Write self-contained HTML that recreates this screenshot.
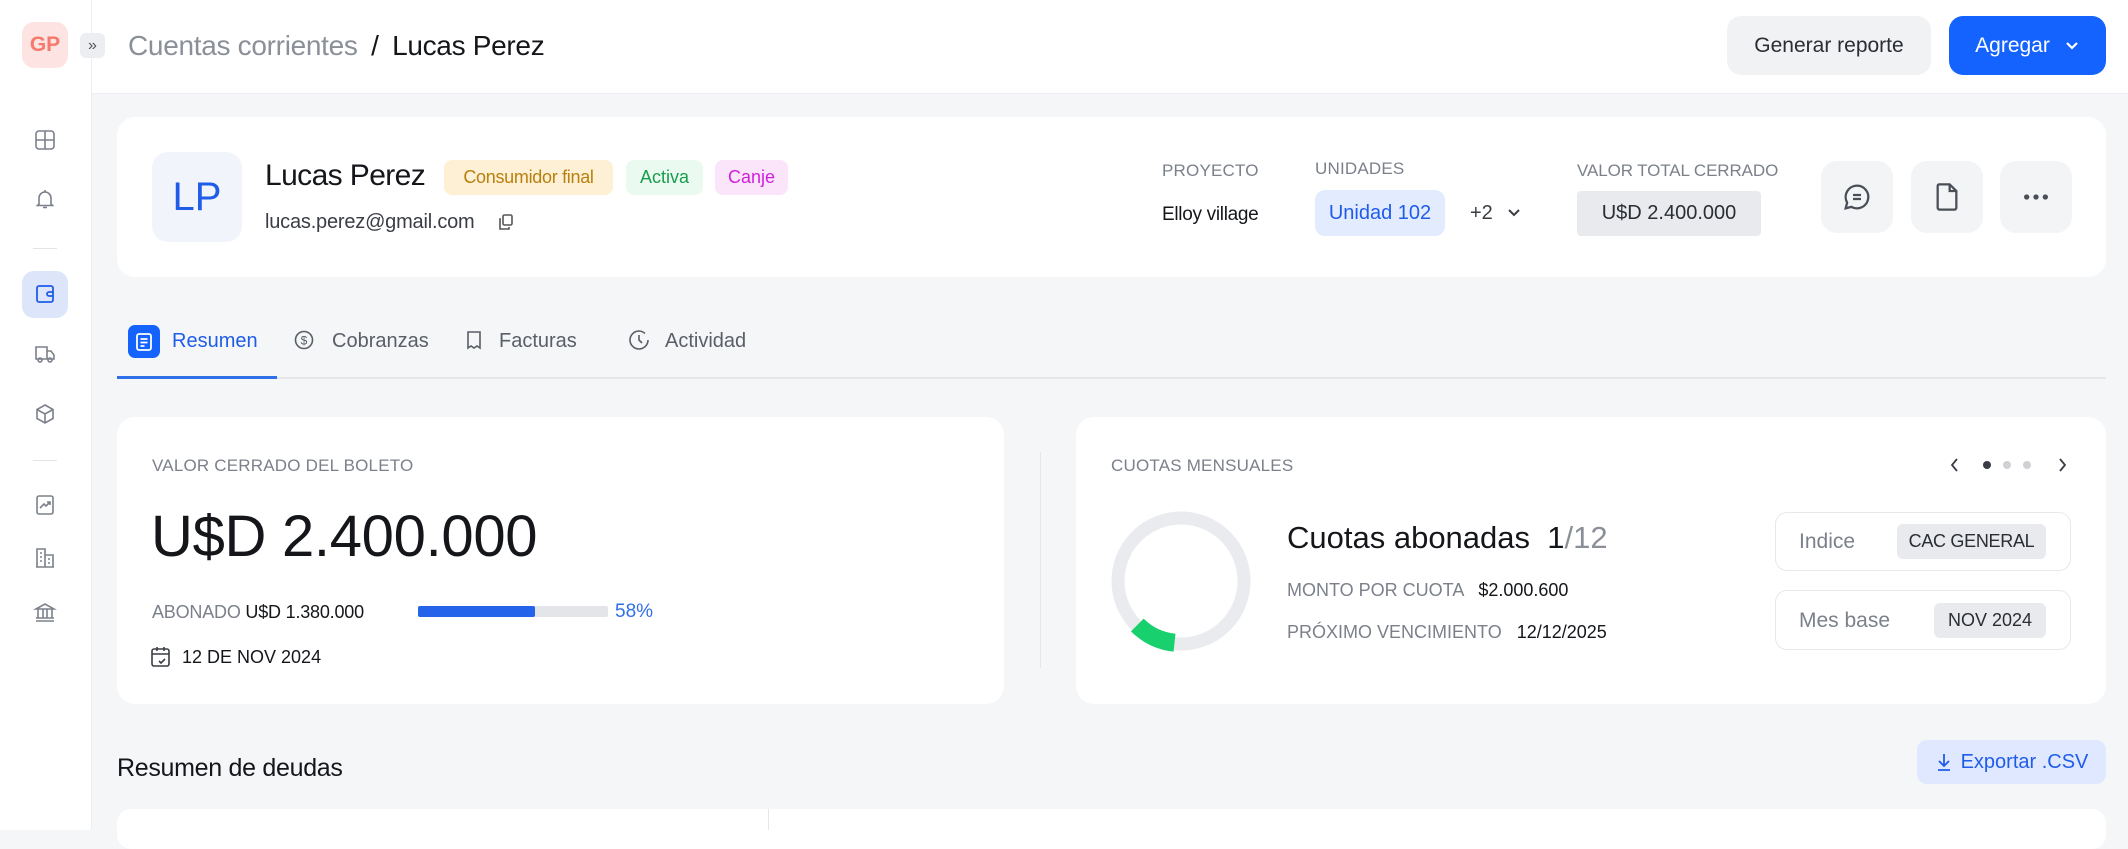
<!DOCTYPE html>
<html><head><meta charset="utf-8"><style>
*{box-sizing:border-box;margin:0;padding:0}
body{width:2128px;height:830px;overflow:hidden;background:#f4f6f8;font-family:"Liberation Sans",sans-serif;color:#14161a;position:relative}
.abs{position:absolute}
.side{left:0;top:0;width:92px;height:830px;background:#fff;border-right:1px solid #eceef1;z-index:3}
.hdr{left:92px;top:0;width:2036px;height:94px;background:#fff;border-bottom:1px solid #eceef1}
.card{background:#fff;border-radius:18px}
.lbl{font-size:17px;color:#7b808a;letter-spacing:.2px}
.ib{width:72px;height:72px;background:#f3f4f6;border-radius:16px;display:flex;align-items:center;justify-content:center}
.pill{border-radius:8px;display:flex;align-items:center;justify-content:center}
svg{display:block}
.si{left:33px;width:24px;height:24px}
</style></head><body>
<div class="abs side">
 <div class="abs" style="left:22px;top:22px;width:46px;height:46px;border-radius:12px;background:#fde4e2;color:#f47a6e;font-weight:bold;font-size:21px;display:flex;align-items:center;justify-content:center">GP</div>
 <svg class="abs si" style="top:128px" viewBox="0 0 24 24" fill="none" stroke="#7b808a" stroke-width="1.6"><rect x="3" y="3" width="18" height="18" rx="3"/><path d="M12 3v18M3 12h18"/></svg>
 <svg class="abs si" style="top:187px" viewBox="0 0 24 24" fill="none" stroke="#7b808a" stroke-width="1.6"><path d="M6 17V11a6 6 0 0112 0v6l1.5 1.5h-15z M10 20.5h4 M12 3v2"/></svg>
 <div class="abs" style="left:33px;top:248px;width:24px;height:1px;background:#e2e4e8"></div>
 <div class="abs" style="left:22px;top:271px;width:46px;height:47px;border-radius:12px;background:#dde5fb"></div>
 <svg class="abs si" style="top:282px" viewBox="0 0 24 24" fill="none" stroke="#1f5de8" stroke-width="1.8"><rect x="4" y="4" width="16" height="16" rx="2"/><path d="M20 10h-4a2 2 0 000 4h4"/></svg>
 <svg class="abs si" style="top:342px" viewBox="0 0 24 24" fill="none" stroke="#7b808a" stroke-width="1.6"><path d="M3 5h11v12H3z M14 9h4l3 4v4h-7"/><circle cx="7" cy="18" r="2"/><circle cx="17" cy="18" r="2"/></svg>
 <svg class="abs si" style="top:402px" viewBox="0 0 24 24" fill="none" stroke="#7b808a" stroke-width="1.6"><path d="M12 3l8 4.5v9L12 21l-8-4.5v-9z M4 7.5l8 4.5 8-4.5 M12 12v9"/></svg>
 <div class="abs" style="left:33px;top:460px;width:24px;height:1px;background:#e2e4e8"></div>
 <svg class="abs si" style="top:493px" viewBox="0 0 24 24" fill="none" stroke="#7b808a" stroke-width="1.6"><rect x="4" y="3" width="16" height="18" rx="2"/><path d="M7 15l4-4 2 2 4-4 M14 9h3v3"/></svg>
 <svg class="abs si" style="top:546px" viewBox="0 0 24 24" fill="none" stroke="#7b808a" stroke-width="1.6"><path d="M4 21V3h8v18 M12 9h8v12 M3 21h18 M7 7h2M7 11h2M7 15h2M15 13h2M15 17h2"/></svg>
 <svg class="abs si" style="top:600px" viewBox="0 0 24 24" fill="none" stroke="#7b808a" stroke-width="1.6"><path d="M3 9l9-5 9 5z M5 9v9M10 9v9M14 9v9M19 9v9M3 21h18M3 18h18"/></svg>
</div>
<div class="abs" style="left:80px;top:33px;width:25px;height:25px;border-radius:6px;background:#eceef1;color:#555;font-size:16px;display:flex;align-items:center;justify-content:center;z-index:4">»</div>
<div class="abs hdr">
 <div class="abs" style="left:36px;top:30px;font-size:28px;color:#8a8f98;white-space:nowrap;letter-spacing:-.3px">Cuentas corrientes <span style="color:#14161a;margin:0 6px">/</span> <span style="color:#14161a">Lucas Perez</span></div>
 <div class="abs" style="left:1635px;top:16px;width:204px;height:59px;border-radius:14px;background:#f1f2f4;font-size:21px;color:#2a2d33;display:flex;align-items:center;justify-content:center">Generar reporte</div>
 <div class="abs" style="left:1857px;top:16px;width:157px;height:59px;border-radius:14px;background:#1463ff;font-size:21px;color:#fff;display:flex;align-items:center;justify-content:center;gap:14px">Agregar <svg width="16" height="16" viewBox="0 0 16 16" fill="none" stroke="#fff" stroke-width="2.2"><path d="M3 5l5 5 5-5"/></svg></div>
</div>

<div class="abs card" style="left:117px;top:117px;width:1989px;height:160px"></div>
<div class="abs" style="left:152px;top:152px;width:90px;height:90px;border-radius:16px;background:#f1f5fb;color:#1f5de8;font-size:40px;display:flex;align-items:center;justify-content:center">LP</div>
<div class="abs" style="left:265px;top:159px;font-size:30px;color:#14161a;letter-spacing:-.6px">Lucas Perez</div>
<div class="abs pill" style="left:444px;top:160px;width:169px;height:35px;background:#fdf0d4;color:#b9800f;font-size:18px;letter-spacing:-.3px">Consumidor final</div>
<div class="abs pill" style="left:626px;top:160px;width:77px;height:35px;background:#eafaf0;color:#1a9c4d;font-size:18px">Activa</div>
<div class="abs pill" style="left:715px;top:160px;width:73px;height:35px;background:#fbe5fb;color:#d01fdc;font-size:18px">Canje</div>
<div class="abs" style="left:265px;top:211px;font-size:20px;color:#3a3d44;letter-spacing:-.2px">lucas.perez@gmail.com</div>
<svg class="abs" style="left:497px;top:213px" width="18" height="18" viewBox="0 0 18 18" fill="none" stroke="#555" stroke-width="1.6"><rect x="6" y="2" width="9" height="10" rx="1.5"/><path d="M4 6H3v10h9v-2"/></svg>

<div class="abs lbl" style="left:1162px;top:161px">PROYECTO</div>
<div class="abs" style="left:1162px;top:204px;font-size:19px;letter-spacing:-.3px">Elloy village</div>
<div class="abs lbl" style="left:1315px;top:159px">UNIDADES</div>
<div class="abs pill" style="left:1315px;top:190px;width:130px;height:46px;background:#e3ebff;color:#1f5de8;font-size:20px;border-radius:10px">Unidad 102</div>
<div class="abs" style="left:1470px;top:202px;font-size:20px;color:#3a3d44">+2</div>
<svg class="abs" style="left:1506px;top:206px" width="16" height="14" viewBox="0 0 16 14" fill="none" stroke="#3a3d44" stroke-width="2"><path d="M3 4l5 5 5-5"/></svg>
<div class="abs lbl" style="left:1577px;top:161px;letter-spacing:-.1px">VALOR TOTAL CERRADO</div>
<div class="abs pill" style="left:1577px;top:191px;width:184px;height:45px;background:#e8eaed;font-size:20px;color:#2a2d33;border-radius:4px">U$D 2.400.000</div>
<div class="abs ib" style="left:1821px;top:161px"><svg width="32" height="32" viewBox="0 0 24 24" fill="none" stroke="#4a4e57" stroke-width="1.7"><path d="M12 3.5a8.5 8.5 0 00-7.4 12.7L3.5 20.5l4.3-1.1A8.5 8.5 0 1012 3.5z"/><path d="M9 10.5h6M9 13.5h6"/></svg></div>
<div class="abs ib" style="left:1911px;top:161px"><svg width="32" height="32" viewBox="0 0 24 24" fill="none" stroke="#4a4e57" stroke-width="1.7"><path d="M6 2.5h8l5 5V20a1.5 1.5 0 01-1.5 1.5h-11A1.5 1.5 0 015 20V4a1.5 1.5 0 011-1.5zM14 2.5V7.5h5"/></svg></div>
<div class="abs ib" style="left:2000px;top:161px"><svg width="32" height="32" viewBox="0 0 24 24" fill="#4a4e57"><circle cx="5" cy="12" r="2"/><circle cx="12" cy="12" r="2"/><circle cx="19" cy="12" r="2"/></svg></div>

<!-- tabs -->
<div class="abs" style="left:117px;top:377px;width:1989px;height:2px;background:#e4e6ea"></div>
<div class="abs" style="left:117px;top:376px;width:160px;height:3px;background:#2f6fe8"></div>
<div class="abs" style="left:128px;top:325px;width:32px;height:33px;border-radius:7px;background:#1463ff;display:flex;align-items:center;justify-content:center"><svg width="18" height="20" viewBox="0 0 18 20" fill="none" stroke="#fff" stroke-width="1.8"><rect x="2" y="2" width="14" height="16" rx="2"/><path d="M5.5 7h7M5.5 10.5h7M5.5 14h4"/></svg></div>
<div class="abs" style="left:172px;top:330px;font-size:20px;color:#1f5de8">Resumen</div>
<svg class="abs" style="left:293px;top:329px" width="22" height="22" viewBox="0 0 22 22" fill="none" stroke="#5a5e66" stroke-width="1.6"><circle cx="11" cy="11" r="8.5"/><text x="11" y="15.5" font-size="12" text-anchor="middle" fill="#5a5e66" stroke="none" font-family="Liberation Sans">$</text></svg>
<div class="abs" style="left:332px;top:330px;font-size:20px;color:#5a5e66">Cobranzas</div>
<svg class="abs" style="left:464px;top:329px" width="20" height="22" viewBox="0 0 20 22" fill="none" stroke="#5a5e66" stroke-width="1.6"><path d="M4 3h12v16l-3-2-3 2-3-2-3 2z"/></svg>
<div class="abs" style="left:499px;top:330px;font-size:20px;color:#5a5e66">Facturas</div>
<svg class="abs" style="left:627px;top:328px" width="24" height="24" viewBox="0 0 24 24" fill="none" stroke="#5a5e66" stroke-width="1.6"><path d="M12 3a9 9 0 109 9M12 3a9 9 0 016 2.5M12 7v5l3 3"/></svg>
<div class="abs" style="left:665px;top:330px;font-size:20px;color:#5a5e66">Actividad</div>

<!-- left card -->
<div class="abs card" style="left:117px;top:417px;width:887px;height:287px"></div>
<div class="abs lbl" style="left:152px;top:456px">VALOR CERRADO DEL BOLETO</div>
<div class="abs" style="left:151px;top:503px;font-size:58px;color:#14161a;letter-spacing:-.3px">U$D 2.400.000</div>
<div class="abs" style="left:152px;top:602px;font-size:18px;color:#7b808a;letter-spacing:-.2px">ABONADO <span style="color:#14161a">U$D 1.380.000</span></div>
<div class="abs" style="left:418px;top:606px;width:190px;height:11px;background:#e4e5e8;border-radius:2px"><div style="width:117px;height:11px;background:#2563eb;border-radius:2px"></div></div>
<div class="abs" style="left:615px;top:601px;font-size:19px;color:#2f6fe8">58%</div>
<svg class="abs" style="left:150px;top:645px" width="22" height="24" viewBox="0 0 22 24" fill="none" stroke="#3a3d44" stroke-width="1.6"><rect x="2" y="4" width="17" height="17" rx="2"/><path d="M2 9h17M7 2v4M14 2v4M9 16l2 2 4-4"/></svg>
<div class="abs" style="left:182px;top:647px;font-size:18px;color:#14161a">12 DE NOV 2024</div>
<div class="abs" style="left:1040px;top:452px;width:1px;height:216px;background:#e4e6ea"></div>

<!-- right card -->
<div class="abs card" style="left:1076px;top:417px;width:1030px;height:287px"></div>
<div class="abs lbl" style="left:1111px;top:456px">CUOTAS MENSUALES</div>
<svg class="abs" style="left:1946px;top:454px" width="124" height="22" viewBox="0 0 124 22" fill="none" stroke="#3a3d44" stroke-width="1.8"><path d="M11 5l-5 6 5 6M114 5l5 6-5 6"/><circle cx="41" cy="11" r="4" fill="#3a3d44" stroke="none"/><circle cx="61" cy="11" r="4" fill="#cfd1d5" stroke="none"/><circle cx="81" cy="11" r="4" fill="#cfd1d5" stroke="none"/></svg>
<svg class="abs" style="left:1110px;top:510px" width="142" height="142" viewBox="0 0 142 142"><circle cx="71" cy="71" r="63" fill="none" stroke="#e9ebee" stroke-width="13"/><circle cx="71" cy="71" r="62" fill="none" stroke="#19d06e" stroke-width="18" stroke-dasharray="42 400" transform="rotate(96 71 71)"/></svg>
<div class="abs" style="left:1287px;top:520px;font-size:31px;color:#14161a">Cuotas abonadas &nbsp;1<span style="color:#8a8f98">/12</span></div>
<div class="abs" style="left:1287px;top:580px;font-size:18px;color:#7b808a">MONTO POR CUOTA &nbsp;&nbsp;<span style="color:#14161a">$2.000.600</span></div>
<div class="abs" style="left:1287px;top:622px;font-size:18px;color:#7b808a">PRÓXIMO VENCIMIENTO &nbsp;&nbsp;<span style="color:#14161a">12/12/2025</span></div>
<div class="abs" style="left:1775px;top:512px;width:296px;height:59px;border:1.5px solid #e6e8eb;border-radius:12px"></div>
<div class="abs" style="left:1799px;top:530px;font-size:21px;color:#7b808a">Indice</div>
<div class="abs pill" style="left:1897px;top:524px;width:149px;height:35px;background:#e8eaed;font-size:18px;color:#2a2d33;border-radius:6px;letter-spacing:-.3px">CAC GENERAL</div>
<div class="abs" style="left:1775px;top:590px;width:296px;height:60px;border:1.5px solid #e6e8eb;border-radius:12px"></div>
<div class="abs" style="left:1799px;top:609px;font-size:21px;color:#7b808a">Mes base</div>
<div class="abs pill" style="left:1934px;top:603px;width:112px;height:35px;background:#e8eaed;font-size:18px;color:#2a2d33;border-radius:6px">NOV 2024</div>

<div class="abs" style="left:117px;top:754px;font-size:25px;color:#14161a;letter-spacing:-.3px">Resumen de deudas</div>
<div class="abs" style="left:1917px;top:740px;width:189px;height:44px;border-radius:10px;background:#e0e8ff;display:flex;align-items:center;justify-content:center;gap:8px;color:#1f5de8;font-size:20px"><svg width="18" height="20" viewBox="0 0 18 20" fill="none" stroke="#1f5de8" stroke-width="1.8"><path d="M9 2v12M4 9l5 5 5-5M3 18h12"/></svg>Exportar .CSV</div>
<div class="abs" style="left:117px;top:809px;width:1989px;height:40px;background:#fff;border-radius:14px"></div>
<div class="abs" style="left:768px;top:809px;width:1px;height:21px;background:#e4e6ea"></div>
</body></html>
